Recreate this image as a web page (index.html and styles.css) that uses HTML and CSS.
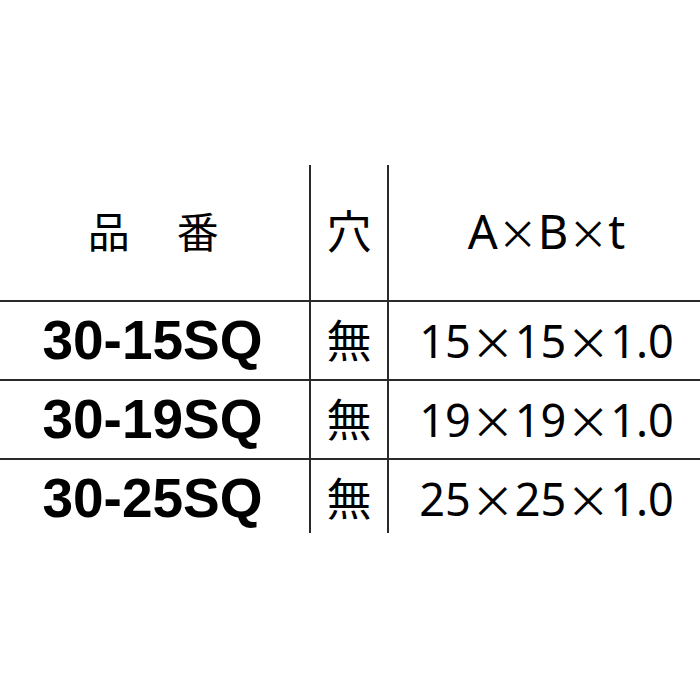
FILE: index.html
```html
<!DOCTYPE html>
<html lang="ja">
<head>
<meta charset="utf-8">
<link rel="stylesheet" href="styles.css">
</head>
<body>
<div class="spec">
  <div class="cell head c1 kanji">品　番</div>
  <div class="cell head c2">穴</div>
  <div class="cell head c3 dim">A<span class="x">×</span>B<span class="x">×</span>t</div>

  <div class="cell row c1 code">30-15SQ</div>
  <div class="cell row c2">無</div>
  <div class="cell row c3 dim">15<span class="x">×</span>15<span class="x">×</span>1.0</div>

  <div class="cell row c1 code">30-19SQ</div>
  <div class="cell row c2">無</div>
  <div class="cell row c3 dim">19<span class="x">×</span>19<span class="x">×</span>1.0</div>

  <div class="cell row last c1 code">30-25SQ</div>
  <div class="cell row last c2">無</div>
  <div class="cell row last c3 dim">25<span class="x">×</span>25<span class="x">×</span>1.0</div>
</div>
</body>
</html>
```
FILE: styles.css
```css
html, body {
  margin: 0;
  padding: 0;
  background: #fff;
}
body {
  width: 700px;
  height: 700px;
  overflow: hidden;
  font-family: "Noto Sans", "Noto Sans CJK JP", sans-serif;
  color: #000;
}
.spec {
  margin-top: 165px;
  display: grid;
  grid-template-columns: 309px 78px 313px;
  grid-template-rows: 135px 79px 79px 75px;
}
.cell {
  display: flex;
  align-items: center;
  justify-content: center;
  font-size: 45px;
  line-height: 1;
  box-sizing: border-box;
}
.head {
  padding-bottom: 2px;
}
.kanji {
  font-size: 42px;
  letter-spacing: 2.5px;
}
.row {
  border-top: 2px solid #2a2a2a;
}
.c2, .c3 {
  border-left: 2px solid #2a2a2a;
}
.c3 {
  padding-left: 4px;
}
.dim {
  font-size: 45px;
  white-space: pre;
}
.x {
  font-family: "Noto Sans CJK JP", sans-serif;
  font-size: 44px;
}
.head.dim {
  font-size: 47px;
}
.head .x {
  font-size: 40px;
}
.last {
  padding-top: 4px;
}
.code {
  font-family: "Liberation Sans", Arial, sans-serif;
  font-weight: bold;
  font-size: 55px;
  padding-right: 4px;
}
```
